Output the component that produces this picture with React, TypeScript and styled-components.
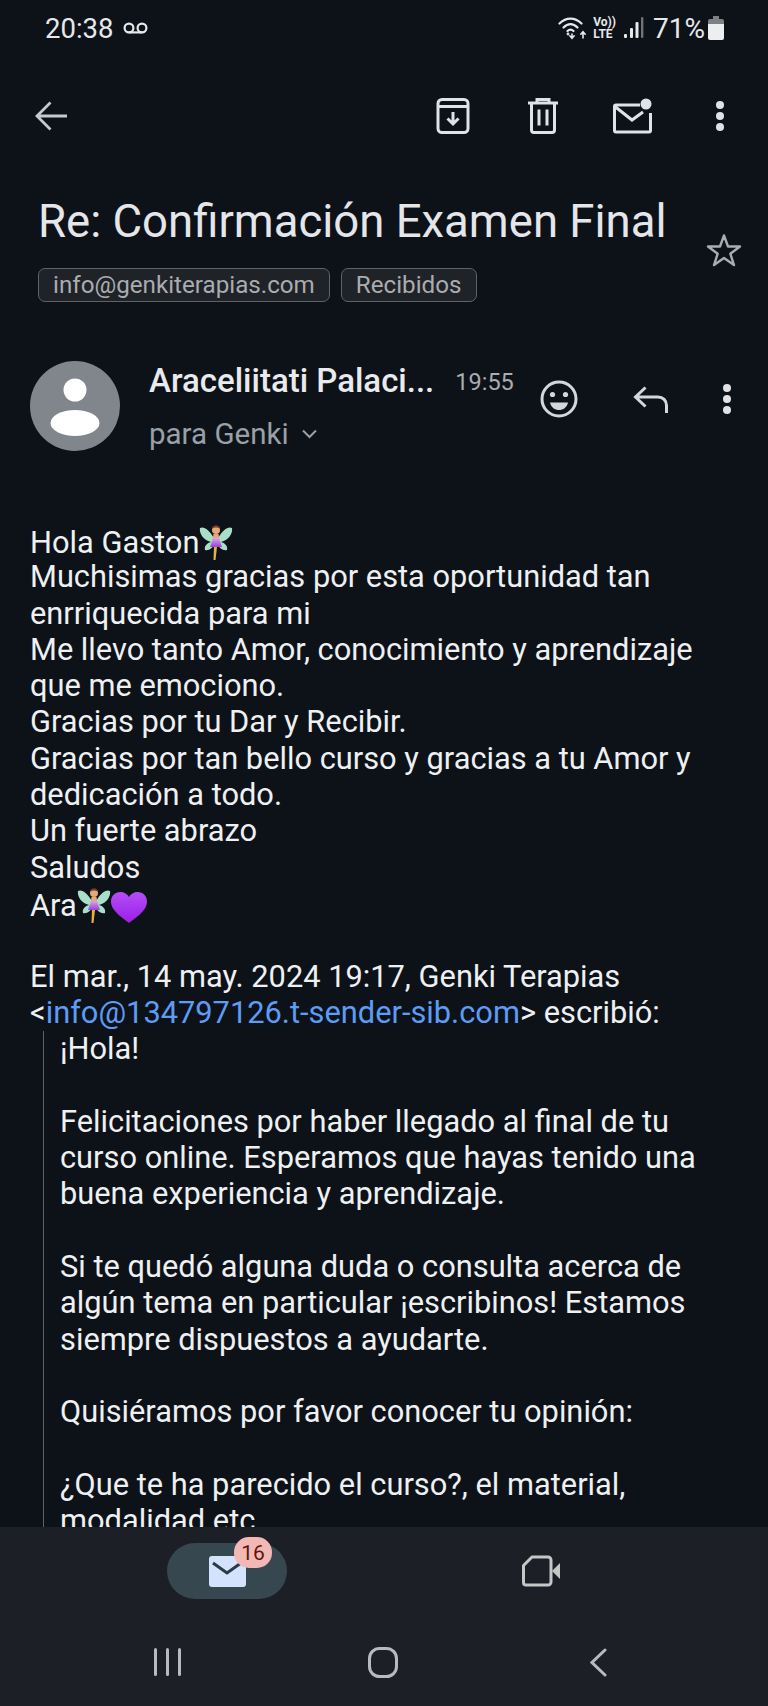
import React from "react";
import styled, { createGlobalStyle } from "styled-components";

const GlobalStyle = createGlobalStyle`
  html, body {
    margin: 0;
    padding: 0;
    background: #0d1219;
  }
  * {
    box-sizing: border-box;
  }
`;

const Page = styled.div`
  width: 768px;
  height: 1706px;
  display: flex;
  flex-direction: column;
  overflow: hidden;
  background: #0d1219;
  color: #eceef0;
  font-family: Roboto, "Liberation Sans", sans-serif;
`;

const Main = styled.div`
  flex: 1;
  min-height: 0;
  overflow: hidden;
`;

const StatusBar = styled.div`
  height: 56px;
  display: flex;
  align-items: center;
  justify-content: space-between;
  padding: 0 44px 0 45px;
  color: #e6e8ea;
`;

const StatusGroup = styled.div`
  display: flex;
  align-items: center;
`;

const Clock = styled.span`
  font-size: 27.5px;
  margin-right: 10px;
`;

const Network = styled.span`
  display: flex;
  flex-direction: column;
  font-size: 12px;
  font-weight: 700;
  line-height: 12px;
  margin: 0 8px 0 5px;
`;

const Percent = styled.span`
  font-size: 28px;
  margin: 0 3px 0 9px;
`;

const Toolbar = styled.div`
  height: 36px;
  margin-top: 42px;
  display: flex;
  align-items: center;
  padding: 0 6px 0 35px;
`;

const ToolbarIcons = styled.div`
  margin-left: auto;
  display: flex;
  align-items: center;
`;

const Subject = styled.div`
  display: flex;
  padding: 63px 26px 0 38px;
`;

const SubjectText = styled.div`
  flex: 1;
  min-width: 0;
`;

const Title = styled.h1`
  margin: 0;
  font-size: 45.5px;
  line-height: 50px;
  font-weight: 400;
  color: #e4e6e9;
  white-space: nowrap;
`;

const Chips = styled.div`
  display: flex;
  gap: 11px;
  margin-top: 21px;
`;

const Chip = styled.span`
  height: 34px;
  padding: 0 14px;
  display: flex;
  align-items: center;
  border: 1px solid #5f6368;
  border-radius: 7px;
  background: #1f2227;
  color: #a9acb0;
  font-size: 24.2px;
`;

const StarSlot = styled.div`
  padding-top: 36px;
`;

const Sender = styled.div`
  display: flex;
  padding: 59px 0 0 30px;
`;

const Avatar = styled.div`
  width: 90px;
  height: 90px;
  flex: none;
`;

const SenderInfo = styled.div`
  margin-left: 29px;
  width: 377px;
`;

const SenderTop = styled.div`
  display: flex;
  align-items: center;
  height: 38px;
`;

const SenderName = styled.span`
  font-size: 33px;
  font-weight: 500;
  color: #e8eaed;
  white-space: nowrap;
`;

const SentAt = styled.span`
  font-size: 23.5px;
  color: #a9acb0;
  margin-left: 21px;
  padding-top: 4px;
`;

const Recipient = styled.div`
  display: flex;
  align-items: center;
  gap: 13px;
  margin-top: 18px;
  font-size: 29.5px;
  line-height: 34px;
  color: #9aa0a6;
`;

const SenderActions = styled.div`
  display: flex;
  align-items: center;
  height: 38px;
  margin-top: 19px;
`;

const Body = styled.div`
  padding: 72px 20px 0 30px;
  font-size: 30.8px;
  line-height: 36.3px;
  color: #eef0f2;
`;

const Line = styled.div`
  height: 36.3px;
  white-space: nowrap;
`;

const Link = styled.a`
  color: #5d9cf5;
  text-decoration: none;
`;

const Quote = styled.div`
  margin-left: 13px;
  padding-left: 16px;
  border-left: 1px solid #5f6368;
`;

const BottomNav = styled.div`
  flex: none;
  height: 179px;
  background: #1c2026;
`;

const Tabs = styled.div`
  display: flex;
  padding-top: 16px;
  height: 103px;
`;

const TabSlot = styled.div<{ $left: number }>`
  width: 120px;
  height: 56px;
  margin-left: ${(p) => p.$left}px;
  display: flex;
  align-items: center;
  justify-content: center;
`;

const MailPill = styled.div`
  position: relative;
  width: 120px;
  height: 56px;
  border-radius: 28px;
  background: #37474f;
  display: flex;
  align-items: center;
  justify-content: center;
`;

const Badge = styled.span`
  position: absolute;
  left: 67px;
  top: -6px;
  width: 38px;
  height: 31px;
  border-radius: 15px;
  background: #f2b8b5;
  color: #601410;
  font-size: 21px;
  display: flex;
  align-items: center;
  justify-content: center;
`;

const SystemNav = styled.div`
  display: flex;
  align-items: center;
  height: 36px;
  margin-top: 14px;
`;

const SystemSlot = styled.div<{ $left: number }>`
  margin-left: ${(p) => p.$left}px;
  display: flex;
`;

const IconButton = styled.span<{ $w: number }>`
  width: ${(p) => p.$w}px;
  display: flex;
  justify-content: center;
  align-items: center;
`;

const Emoji = styled.svg`
  display: inline-block;
  vertical-align: -8px;
`;

const Voicemail = () => (
  <svg width="25" height="14" viewBox="0 0 25 14" fill="none" stroke="#e6e8ea" strokeWidth="2.2">
    <circle cx="6" cy="7" r="4.4" />
    <circle cx="19" cy="7" r="4.4" />
    <path d="M6 11.4h13" />
  </svg>
);

const Wifi = () => (
  <svg width="30" height="24" viewBox="0 0 30 24" fill="none" stroke="#e6e8ea" strokeWidth="2.2" strokeLinecap="round">
    <path d="M1.5 7.5C8 1 17 1 23.5 7.5" />
    <path d="M5.5 11.5C10 7 15 7 19.5 11.5" />
    <path d="M9.5 15C11.5 13 13.5 13 15.5 15" />
    <path d="M14 18v4M11.8 19.8l2.2 2.4 2.2-2.4" strokeWidth="1.6" />
    <path d="M25 22v-6M22.8 18.2l2.2-2.4 2.2 2.4" strokeWidth="1.6" />
    <circle cx="10" cy="18" r="0.8" strokeWidth="1.2" />
  </svg>
);

const Signal = () => (
  <svg width="20" height="22" viewBox="0 0 20 22">
    <rect x="0" y="17" width="3" height="4" rx="1" fill="#e6e8ea" />
    <rect x="6" y="11" width="3" height="10" rx="1" fill="#e6e8ea" />
    <rect x="11.5" y="5" width="3" height="16" rx="1" fill="#e6e8ea" />
    <rect x="17" y="0" width="2.4" height="21" rx="1" fill="#6f7378" />
  </svg>
);

const Battery = () => (
  <svg width="16" height="24" viewBox="0 0 16 24">
    <path d="M5 0h6v3h3a2 2 0 0 1 2 2v3H0V5a2 2 0 0 1 2-2h3z" fill="#7d8186" />
    <path d="M0 8h16v14a2 2 0 0 1-2 2H2a2 2 0 0 1-2-2z" fill="#eceef0" />
  </svg>
);

const BackArrow = () => (
  <svg width="32" height="30" viewBox="0 0 32 30" fill="none" stroke="#c6c9cd" strokeWidth="2.8">
    <path d="M15.5 1.5 2 15l13.5 13.5M2 15h30" />
  </svg>
);

const Archive = () => (
  <svg width="34" height="36" viewBox="0 0 34 36" fill="none" stroke="#e0e2e6" strokeWidth="3">
    <path d="M6 1.5h22a4 4 0 0 1 4 4v25a4 4 0 0 1-4 4H6a4 4 0 0 1-4-4v-25a4 4 0 0 1 4-4zM2 8.5h30" strokeLinejoin="round" />
    <path d="M17 14v12M11.5 20.5 17 26l5.5-5.5" strokeWidth="3" />
  </svg>
);

const Trash = () => (
  <svg width="30" height="36" viewBox="0 0 30 36" fill="none" stroke="#e0e2e6" strokeWidth="3">
    <path d="M0 5h30M9 5V1.5h12V5" />
    <path d="M3.5 5v27a2.5 2.5 0 0 0 2.5 2.5h18a2.5 2.5 0 0 0 2.5-2.5V5" />
    <path d="M11 11.5v16M19 11.5v16" />
  </svg>
);

const MailUnread = () => (
  <svg width="40" height="36" viewBox="0 0 40 36" fill="none" stroke="#e0e2e6" strokeWidth="3">
    <path d="M27 7H3a1.5 1.5 0 0 0-1.5 1.5v24A1.5 1.5 0 0 0 3 34h33a1.5 1.5 0 0 0 1.5-1.5V15" />
    <path d="M2.5 9 19 22l11-8" />
    <circle cx="33" cy="6" r="5.5" fill="#e0e2e6" stroke="none" />
  </svg>
);

const Dots = () => (
  <svg width="8" height="30" viewBox="0 0 8 30" fill="#e0e2e6">
    <circle cx="4" cy="4" r="4" />
    <circle cx="4" cy="15" r="4" />
    <circle cx="4" cy="26" r="4" />
  </svg>
);

const Star = () => (
  <svg width="36" height="34" viewBox="0 0 36 34" fill="none" stroke="#a9acb0" strokeWidth="2.4" strokeLinejoin="round">
    <path d="M18 2.5 22 13.5h12l-9.7 7.2L28 32l-10-7-10 7 3.7-11.3L2 13.5h12z" />
  </svg>
);

const AvatarIcon = () => (
  <svg width="90" height="90" viewBox="0 0 90 90">
    <circle cx="45" cy="45" r="45" fill="#80868b" />
    <ellipse cx="45" cy="29" rx="11.5" ry="11.5" fill="#fff" />
    <ellipse cx="45" cy="62" rx="24.5" ry="13" fill="#fff" />
  </svg>
);

const Smile = () => (
  <svg width="38" height="38" viewBox="0 0 38 38" fill="none" stroke="#d4d6da" strokeWidth="3">
    <circle cx="19" cy="19" r="17" />
    <circle cx="12.5" cy="14.5" r="2.6" fill="#d4d6da" stroke="none" />
    <circle cx="25.5" cy="14.5" r="2.6" fill="#d4d6da" stroke="none" />
    <path d="M10 22.5h18c-1 5-5 7.5-9 7.5s-8-2.5-9-7.5z" fill="#d4d6da" stroke="none" />
  </svg>
);

const Reply = () => (
  <svg width="35" height="27" viewBox="0 0 35 27" fill="none" stroke="#d4d6da" strokeWidth="3">
    <path d="M12.5 1.5 2.5 11l10 9.5M2.5 11H25c5 0 8.5 3.5 8.5 8.5V27" />
  </svg>
);

const Chevron = () => (
  <svg width="15" height="10" viewBox="0 0 15 10" fill="none" stroke="#9aa0a6" strokeWidth="2">
    <path d="M1 1.5 7.5 8 14 1.5" />
  </svg>
);

const Fairy = () => (
  <Emoji width="34" height="38" viewBox="0 0 34 38">
    <defs>
      <linearGradient id="fairyDress" x1="0" y1="0" x2="0" y2="1">
        <stop offset="0" stopColor="#d9a5e8" />
        <stop offset="1" stopColor="#9b3fd6" />
      </linearGradient>
    </defs>
    <path d="M15 15C10 7 5 3 1 5c-1 5 3 12 11 14-4 1-7 4-6 8 4 1 8-2 10-7z" fill="#a9dfc9" />
    <path d="M19 15C24 7 29 3 33 5c1 5-3 12-11 14 4 1 7 4 6 8-4 1-8-2-10-7z" fill="#a9dfc9" />
    <circle cx="17" cy="7" r="4" fill="#e7a878" />
    <path d="M13 6c0-5 8-5 8 0-2-2-6-2-8 0z" fill="#6d3f22" />
    <path d="M14.5 11h5l1 6h-7z" fill="#e7a878" />
    <path d="M14 15h6l3 9H11z" fill="url(#fairyDress)" />
    <path d="M15 24h3l-1.5 13h-2z" fill="#e9b040" />
  </Emoji>
);

const Heart = () => (
  <Emoji width="36" height="32" viewBox="0 0 36 32">
    <defs>
      <linearGradient id="heartFill" x1="0" y1="0" x2="0" y2="1">
        <stop offset="0" stopColor="#b44ef5" />
        <stop offset="1" stopColor="#9a1fe8" />
      </linearGradient>
    </defs>
    <path d="M18 31C7 23 0 17 0 9.5 0 4 4 0 9.5 0 13 0 16.5 2 18 5c1.5-3 5-5 8.5-5C32 0 36 4 36 9.5 36 17 29 23 18 31z" fill="url(#heartFill)" />
  </Emoji>
);

const MailFilled = () => (
  <svg width="37" height="31" viewBox="0 0 37 31">
    <rect width="37" height="31" rx="3" fill="#d3e3fd" />
    <path d="M4 7 18 17 32 7" fill="none" stroke="#2c3a45" strokeWidth="3" />
  </svg>
);

const Video = () => (
  <svg width="38" height="32" viewBox="0 0 38 32" fill="none" stroke="#c4c7c5" strokeWidth="3" strokeLinejoin="round">
    <path d="M10 2h16a3 3 0 0 1 3 3v22a3 3 0 0 1-3 3H4a2.5 2.5 0 0 1-2.5-2.5V10.5z" />
    <path d="M30 16 38 8v16z" fill="#c4c7c5" stroke="none" />
  </svg>
);

const Recents = () => (
  <svg width="27" height="28" viewBox="0 0 27 28" fill="#b8babd">
    <rect x="0" y="0" width="3" height="28" rx="1.5" />
    <rect x="12" y="0" width="3" height="28" rx="1.5" />
    <rect x="24" y="0" width="3" height="28" rx="1.5" />
  </svg>
);

const Home = () => (
  <svg width="30" height="31" viewBox="0 0 30 31" fill="none" stroke="#b8babd" strokeWidth="3">
    <rect x="1.5" y="1.5" width="27" height="28" rx="10" />
  </svg>
);

const NavBack = () => (
  <svg width="17" height="29" viewBox="0 0 17 29" fill="none" stroke="#b8babd" strokeWidth="3" strokeLinecap="round">
    <path d="M15 2 2 14.5 15 27" />
  </svg>
);

const replyLines: React.ReactNode[] = [
  <>
    Hola Gaston
    <Fairy />
  </>,
  "Muchisimas gracias por esta oportunidad tan",
  "enrriquecida para mi",
  "Me llevo tanto Amor, conocimiento y aprendizaje",
  "que me emociono.",
  "Gracias por tu Dar y Recibir.",
  "Gracias por tan bello curso y gracias a tu Amor y",
  "dedicación a todo.",
  "Un fuerte abrazo",
  "Saludos",
  <>
    Ara
    <Fairy />
    <Heart />
  </>,
  "",
  "El mar., 14 may. 2024 19:17, Genki Terapias",
  <>
    &lt;<Link>info@134797126.t-sender-sib.com</Link>&gt; escribió:
  </>,
];

const quotedLines = [
  "¡Hola!",
  "",
  "Felicitaciones por haber llegado al final de tu",
  "curso online. Esperamos que hayas tenido una",
  "buena experiencia y aprendizaje.",
  "",
  "Si te quedó alguna duda o consulta acerca de",
  "algún tema en particular ¡escribinos! Estamos",
  "siempre dispuestos a ayudarte.",
  "",
  "Quisiéramos por favor conocer tu opinión:",
  "",
  "¿Que te ha parecido el curso?, el material,",
  "modalidad etc.",
];

export default function App() {
  return (
    <Page>
      <GlobalStyle />
      <Main>
        <StatusBar>
          <StatusGroup>
            <Clock>20:38</Clock>
            <Voicemail />
          </StatusGroup>
          <StatusGroup>
            <Wifi />
            <Network>
              <span>Vo))</span>
              <span>LTE</span>
            </Network>
            <Signal />
            <Percent>71%</Percent>
            <Battery />
          </StatusGroup>
        </StatusBar>
        <Toolbar>
          <BackArrow />
          <ToolbarIcons>
            <IconButton $w={90}>
              <Archive />
            </IconButton>
            <IconButton $w={90}>
              <Trash />
            </IconButton>
            <IconButton $w={90}>
              <MailUnread />
            </IconButton>
            <IconButton $w={84}>
              <Dots />
            </IconButton>
          </ToolbarIcons>
        </Toolbar>
        <Subject>
          <SubjectText>
            <Title>Re: Confirmación Examen Final</Title>
            <Chips>
              <Chip>info@genkiterapias.com</Chip>
              <Chip>Recibidos</Chip>
            </Chips>
          </SubjectText>
          <StarSlot>
            <Star />
          </StarSlot>
        </Subject>
        <Sender>
          <Avatar>
            <AvatarIcon />
          </Avatar>
          <SenderInfo>
            <SenderTop>
              <SenderName>Araceliitati Palaci...</SenderName>
              <SentAt>19:55</SentAt>
            </SenderTop>
            <Recipient>
              para Genki
              <Chevron />
            </Recipient>
          </SenderInfo>
          <SenderActions>
            <IconButton $w={66}>
              <Smile />
            </IconButton>
            <IconButton $w={116}>
              <Reply />
            </IconButton>
            <IconButton $w={38}>
              <Dots />
            </IconButton>
          </SenderActions>
        </Sender>
        <Body>
          {replyLines.map((line, i) => (
            <Line key={i}>{line}</Line>
          ))}
          <Quote>
            {quotedLines.map((line, i) => (
              <Line key={i}>{line}</Line>
            ))}
          </Quote>
        </Body>
      </Main>
      <BottomNav>
        <Tabs>
          <TabSlot $left={167}>
            <MailPill>
              <MailFilled />
              <Badge>16</Badge>
            </MailPill>
          </TabSlot>
          <TabSlot $left={194}>
            <Video />
          </TabSlot>
        </Tabs>
        <SystemNav>
          <SystemSlot $left={154}>
            <Recents />
          </SystemSlot>
          <SystemSlot $left={187}>
            <Home />
          </SystemSlot>
          <SystemSlot $left={192}>
            <NavBack />
          </SystemSlot>
        </SystemNav>
      </BottomNav>
    </Page>
  );
}
